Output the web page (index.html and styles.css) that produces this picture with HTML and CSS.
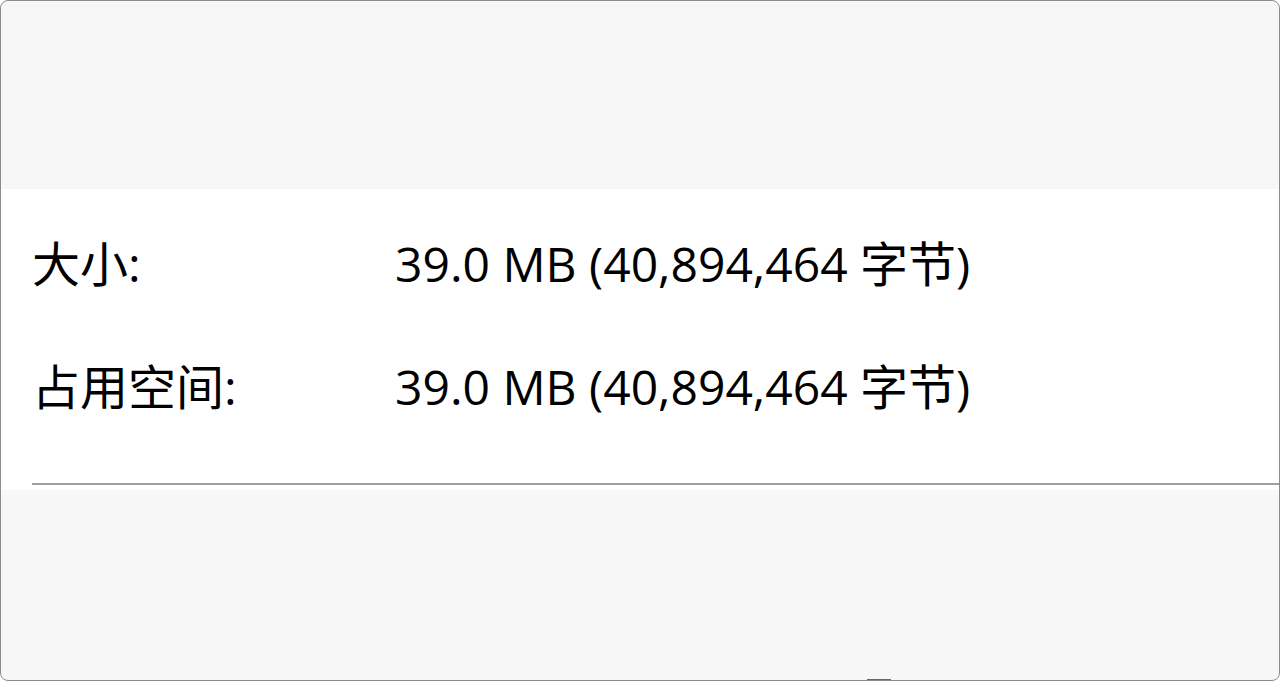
FILE: index.html
```html
<!DOCTYPE html>
<html lang="zh-CN">
<head>
  <meta charset="UTF-8">
  <meta name="viewport" content="width=device-width, initial-scale=1.0">
  <title>属性</title>
  <link rel="stylesheet" href="styles.css">
</head>
<body>
  <div class="window">
    <div class="top-space"></div>
    <div class="panel">
      <div class="row">
        <div class="label">大小:</div>
        <div class="value">39.0 MB (40,894,464 字节)</div>
      </div>
      <div class="row">
        <div class="label">占用空间:</div>
        <div class="value">39.0 MB (40,894,464 字节)</div>
      </div>
      <div class="divider"></div>
    </div>
    <div class="taskbar-hint"></div>
  </div>
</body>
</html>
```

FILE: styles.css
```css
body {
  margin: 0;
  padding: 0;
  background-color: #ffffff;
  font-family: "Open Sans", "Noto Sans CJK SC", sans-serif;
  color: #000;
}

.window {
  position: relative;
  box-sizing: border-box;
  height: 681px;
  border: 1px solid #8c8c8c;
  border-radius: 8px;
  background-color: #f7f7f7;
  overflow: hidden;
}

.top-space {
  height: 188px;
}

.panel {
  background-color: #ffffff;
  height: 301px;
  padding-top: 45px;
  padding-left: 31px;
  box-sizing: border-box;
}

.row {
  display: grid;
  grid-template-columns: 363px 1fr;
  height: 60px;
  line-height: 60px;
  font-size: 48px;
  margin-bottom: 63px;
}

.row:nth-of-type(2) {
  margin-bottom: 66px;
}

.divider {
  border-top: 2px solid #a0a0a0;
}

.taskbar-hint {
  position: absolute;
  left: 866px;
  bottom: -1px;
  width: 24px;
  height: 2px;
  background-color: #3a6fb8;
}
```
